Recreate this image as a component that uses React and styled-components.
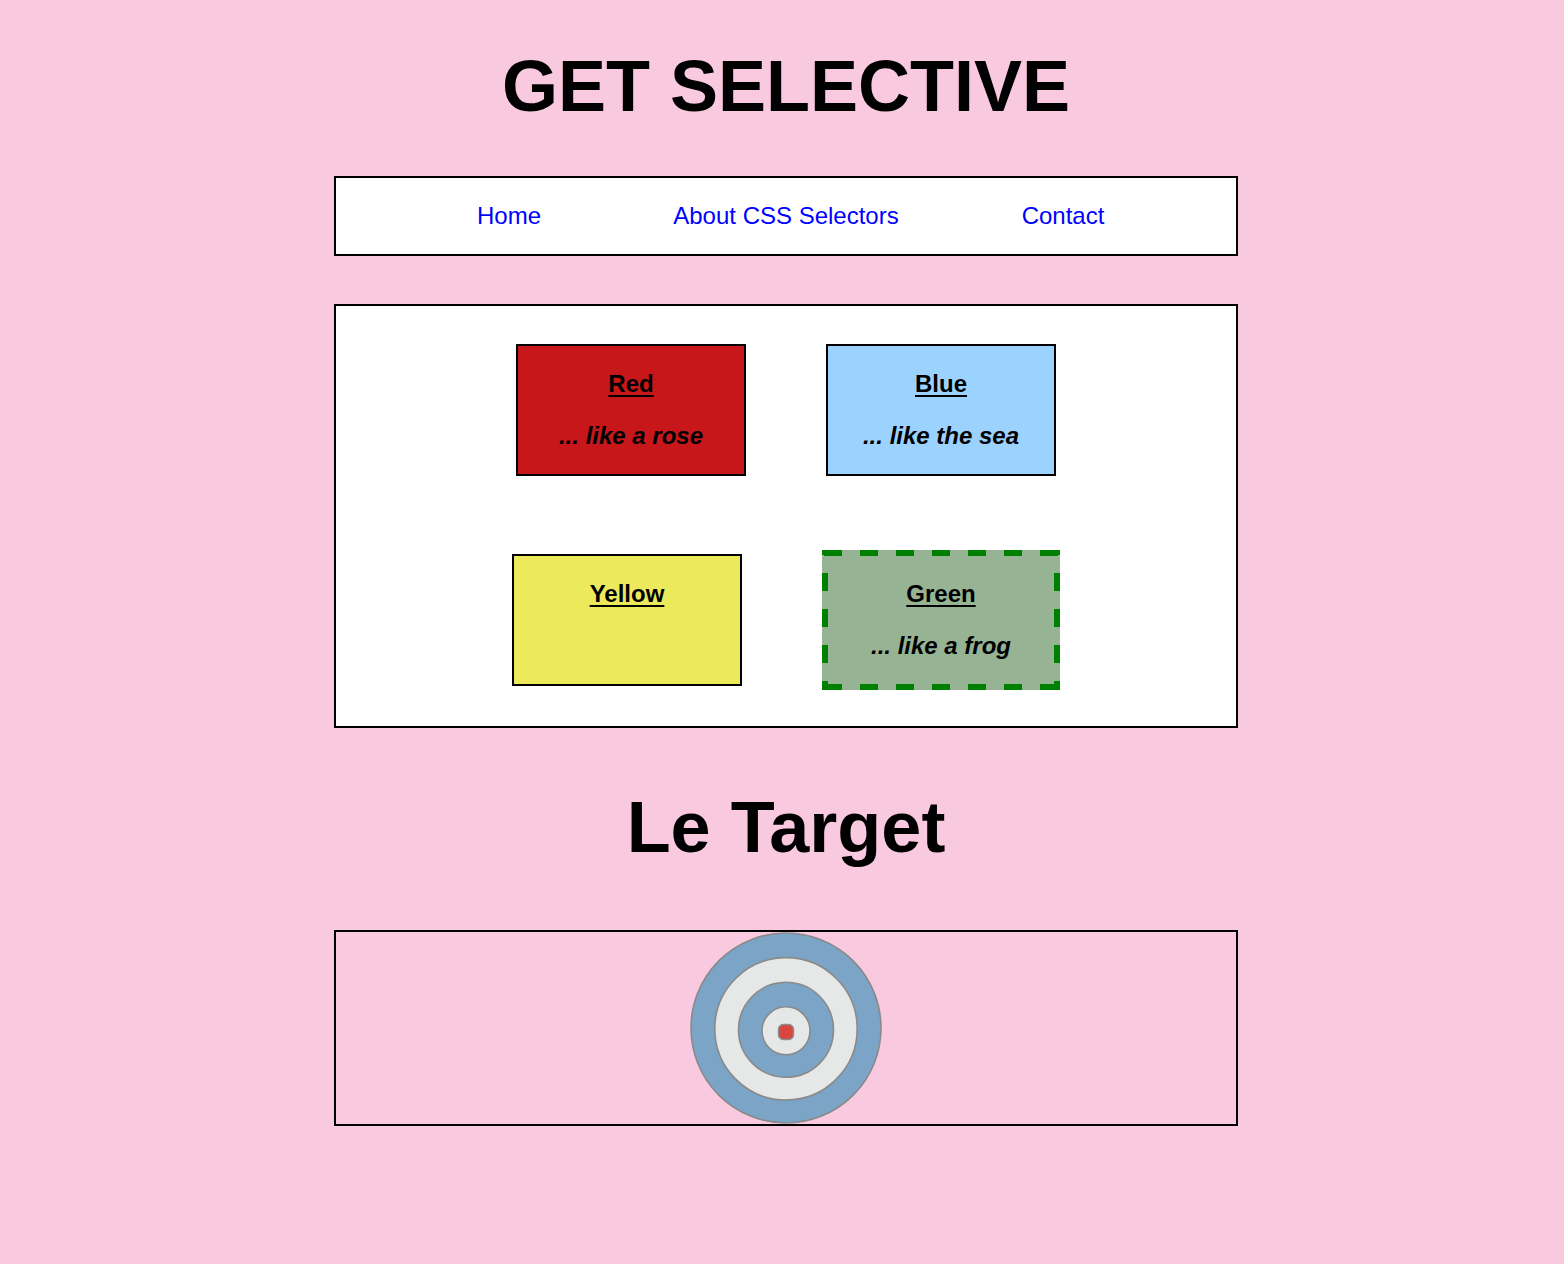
import React from "react";
import styled, { createGlobalStyle, css } from "styled-components";

const GlobalStyle = createGlobalStyle`
  html, body {
    margin: 0;
    padding: 0;
    background: #f9cadf;
  }
  body {
    font-family: "Liberation Sans", Arial, Helvetica, sans-serif;
    color: #000;
  }
`;

const Page = styled.div`
  display: flex;
  flex-direction: column;
  align-items: center;
  padding: 46px 0 120px 8px;
`;

const Title = styled.h1`
  margin: 0;
  font-size: 72px;
  line-height: 80px;
  font-weight: 700;
  text-align: center;
`;

const Panel = styled.div`
  box-sizing: border-box;
  width: 904px;
  border: 2px solid #000;
  background: ${(p) => p.$bg || "#fff"};
`;

const Nav = styled(Panel).attrs({ as: "nav" })`
  margin-top: 50px;
  height: 80px;
  display: flex;
  align-items: center;
  justify-content: center;
`;

const NavList = styled.ul`
  list-style: none;
  margin: 0;
  padding: 0;
  display: grid;
  grid-template-columns: repeat(3, 277px);
`;

const NavItem = styled.li`
  text-align: center;
`;

const NavLink = styled.a`
  font-size: 24px;
  line-height: 28px;
  color: #0000ff;
  text-decoration: none;
`;

const Boxes = styled(Panel).attrs({ as: "section" })`
  margin-top: 48px;
  padding: 38px 0 36px;
  display: flex;
  flex-direction: column;
  gap: 74px;
`;

const Row = styled.div`
  display: flex;
  justify-content: center;
  align-items: center;
  gap: 80px;
`;

const dashH = "linear-gradient(90deg, #008000 18px, transparent 18px)";
const dashV = "linear-gradient(180deg, #008000 18px, transparent 18px)";

const Card = styled.div`
  box-sizing: content-box;
  width: 226px;
  height: 104px;
  padding-top: 24px;
  background: ${(p) => p.$bg};
  border: 2px solid #000;
  text-align: center;
  font-weight: 700;
  font-size: 24px;
  line-height: 28px;

  ${(p) =>
    p.$dashed &&
    css`
      border: 6px solid transparent;
      background:
        ${dashH} 2px 0 / 36px 6px repeat-x,
        ${dashH} 2px 100% / 36px 6px repeat-x,
        ${dashV} 0 23px / 6px 36px repeat-y,
        ${dashV} 100% 23px / 6px 36px repeat-y,
        ${p.$bg};
      background-origin: border-box;
      background-clip: border-box;
    `}
`;

const CardTitle = styled.h3`
  margin: 0;
  font-size: 24px;
  line-height: 28px;
  text-decoration: underline;
  text-decoration-thickness: 2px;
  text-underline-offset: 3px;
`;

const CardNote = styled.p`
  margin: 24px 0 0;
  font-style: italic;
`;

const SubTitle = styled.h2`
  margin: 59px 0 0;
  font-size: 72px;
  line-height: 80px;
  font-weight: 700;
  text-align: center;
`;

const TargetBox = styled(Panel)`
  margin-top: 63px;
  height: 196px;
  display: flex;
  align-items: center;
  justify-content: center;
`;

const Target = () => (
  <svg width="192" height="192" viewBox="0 0 192 192">
    <circle cx="96" cy="96" r="95" fill="#7ba4c7" stroke="#8a8a8a" strokeWidth="1.6" />
    <circle cx="96" cy="96.8" r="71.2" fill="#e6e8e7" stroke="#8a8a8a" strokeWidth="1.6" />
    <circle cx="96" cy="97.8" r="47.5" fill="#7ba4c7" stroke="#8a8a8a" strokeWidth="1.6" />
    <circle cx="96" cy="98.8" r="24" fill="#e6e8e7" stroke="#8a8a8a" strokeWidth="1.6" />
    <rect x="88.5" y="92.5" width="15" height="15" rx="5" fill="#d8473f" stroke="#8a8a8a" strokeWidth="1.4" />
  </svg>
);

export default function App() {
  return (
    <>
      <GlobalStyle />
      <Page>
        <Title>GET SELECTIVE</Title>
        <Nav>
          <NavList>
            <NavItem><NavLink href="#">Home</NavLink></NavItem>
            <NavItem><NavLink href="#">About CSS Selectors</NavLink></NavItem>
            <NavItem><NavLink href="#">Contact</NavLink></NavItem>
          </NavList>
        </Nav>
        <Boxes>
          <Row>
            <Card $bg="#c8171a">
              <CardTitle>Red</CardTitle>
              <CardNote>... like a rose</CardNote>
            </Card>
            <Card $bg="#9cd2fe">
              <CardTitle>Blue</CardTitle>
              <CardNote>... like the sea</CardNote>
            </Card>
          </Row>
          <Row>
            <Card $bg="#ecea5b">
              <CardTitle>Yellow</CardTitle>
            </Card>
            <Card $bg="#96b494" $dashed>
              <CardTitle>Green</CardTitle>
              <CardNote>... like a frog</CardNote>
            </Card>
          </Row>
        </Boxes>
        <SubTitle>Le Target</SubTitle>
        <TargetBox $bg="transparent">
          <Target />
        </TargetBox>
      </Page>
    </>
  );
}
